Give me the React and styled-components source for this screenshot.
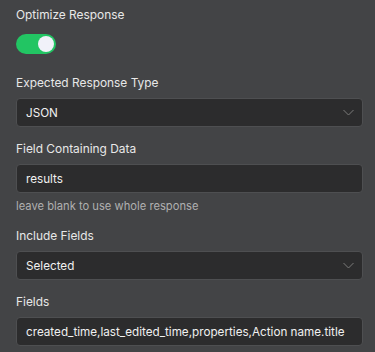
import styled, { createGlobalStyle } from "styled-components";

const GlobalStyle = createGlobalStyle`
  html, body {
    margin: 0;
    padding: 0;
    background: #434446;
  }
  body {
    font-family: Inter, "Noto Sans", sans-serif;
    -webkit-font-smoothing: antialiased;
  }
`;

const Panel = styled.div`
  width: 375px;
  height: 352px;
  box-sizing: border-box;
  padding: 7px 12px 0 16px;
  background: #434446;
  overflow: hidden;
`;

const Field = styled.div`
  display: flex;
  flex-direction: column;
  margin-bottom: ${(p) => (p.$gap ? p.$gap : 14)}px;
`;

const Label = styled.div`
  font-size: 11.9px;
  line-height: 16px;
  color: #e8e8e8;
  margin-bottom: ${(p) => (p.$gap ? p.$gap : 7)}px;
`;

const Toggle = styled.div`
  width: 40px;
  height: 20px;
  border-radius: 10px;
  background: ${(p) => (p.$on ? "#22c563" : "#666")};
  position: relative;

  &::after {
    content: "";
    position: absolute;
    top: 2px;
    left: ${(p) => (p.$on ? "22px" : "2px")};
    width: 16px;
    height: 16px;
    border-radius: 50%;
    background: #f1f1f9;
  }
`;

const Box = styled.div`
  height: 29px;
  box-sizing: border-box;
  border: 1px solid #4e4f51;
  border-radius: 4px;
  background: #2c2c2d;
  display: flex;
  align-items: center;
  justify-content: space-between;
  padding: 0 8px 0 9px;
  font-size: 11.7px;
  color: #f0f0f0;
  white-space: nowrap;
  overflow: hidden;
`;

const Chevron = styled.svg`
  width: 11px;
  height: 7px;
  flex-shrink: 0;
`;

const Hint = styled.div`
  font-size: 11.2px;
  line-height: 16px;
  color: #b0b0b0;
  margin-top: 5px;
`;

function Select({ value }) {
  return (
    <Box>
      <span>{value}</span>
      <Chevron viewBox="0 0 11 7" fill="none">
        <path d="M0.5 1l5 5 5-5" stroke="#7a7a7a" strokeWidth="1" />
      </Chevron>
    </Box>
  );
}

export default function App() {
  return (
    <Panel>
      <GlobalStyle />
      <Field $gap={21}>
        <Label $gap={11}>Optimize Response</Label>
        <Toggle $on />
      </Field>
      <Field>
        <Label>Expected Response Type</Label>
        <Select value="JSON" />
      </Field>
      <Field $gap={14}>
        <Label>Field Containing Data</Label>
        <Box>results</Box>
        <Hint>leave blank to use whole response</Hint>
      </Field>
      <Field>
        <Label>Include Fields</Label>
        <Select value="Selected" />
      </Field>
      <Field>
        <Label>Fields</Label>
        <Box>created_time,last_edited_time,properties,Action name.title</Box>
      </Field>
    </Panel>
  );
}
